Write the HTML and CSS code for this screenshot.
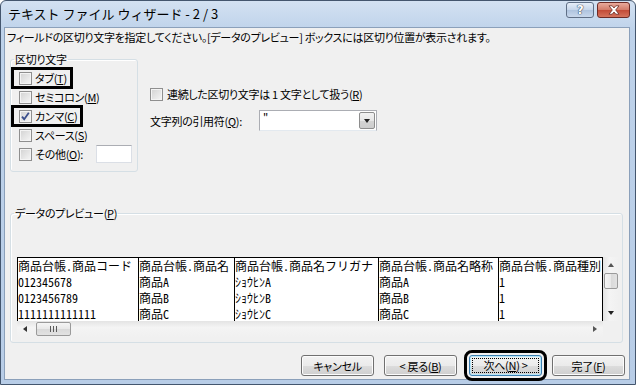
FILE: index.html
```html
<!DOCTYPE html>
<html lang="ja">
<head>
<meta charset="UTF-8">
<title>テキスト ファイル ウィザード - 2 / 3</title>
<link rel="stylesheet" href="styles.css">
</head>
<body>
<div class="window">
  <div class="titlebar">
    <span class="title">テキスト ファイル ウィザード - 2 / 3</span>
    <span class="capbtn help">?</span>
    <span class="capbtn close">
      <svg width="14" height="10" viewBox="0 0 14 10"><path d="M2 .8h3.2L7 3 8.8.8H12L8.7 5 12 9.2H8.8L7 7 5.2 9.2H2L5.3 5z" fill="#fff" stroke="#6b2a22" stroke-width=".8"/></svg>
    </span>
  </div>

  <div class="client">
    <p class="intro">フィールドの区切り文字を指定してください。[データのプレビュー] ボックスには区切り位置が表示されます。</p>

    <div class="upper">
      <fieldset class="group delims">
        <legend>区切り文字</legend>
        <div class="list">
          <label class="chk marked"><span class="box"></span><span>タブ(<u>T</u>)</span></label>
          <label class="chk"><span class="box"></span><span>セミコロン(<u>M</u>)</span></label>
          <label class="chk marked"><span class="box"><svg width="11" height="11" viewBox="0 0 11 11"><path d="M2 5.6l2.2 2.6L8.8 1.8" fill="none" stroke="#3b4f8c" stroke-width="1.8"/></svg></span><span>カンマ(<u>C</u>)</span></label>
          <label class="chk"><span class="box"></span><span>スペース(<u>S</u>)</span></label>
          <div class="other">
            <label class="chk"><span class="box"></span><span>その他(<u>O</u>):</span></label>
            <span class="field"></span>
          </div>
        </div>
      </fieldset>

      <div class="options">
        <label class="chk"><span class="box"></span><span>連続した区切り文字は 1 文字として扱う(<u>R</u>)</span></label>
        <div class="quote">
          <span class="qlabel">文字列の引用符(<u>Q</u>):</span>
          <span class="combo"><span>"</span><span class="drop"><i class="tri down"></i></span></span>
        </div>
      </div>
    </div>

    <fieldset class="group preview">
      <legend>データのプレビュー(<u>P</u>)</legend>
      <div class="pbox">
        <div class="pdata">
          <div class="grid">
            <div class="cell head">商品台帳.商品コード</div>
            <div class="cell head">商品台帳.商品名</div>
            <div class="cell head">商品台帳.商品名フリガナ</div>
            <div class="cell head">商品台帳.商品名略称</div>
            <div class="cell head">商品台帳.商品種別</div>
            <div class="cell head"></div>

            <div class="cell">012345678</div>
            <div class="cell">商品A</div>
            <div class="cell">ｼｮｳﾋﾝA</div>
            <div class="cell">商品A</div>
            <div class="cell">1</div>
            <div class="cell"></div>

            <div class="cell">0123456789</div>
            <div class="cell">商品B</div>
            <div class="cell">ｼｮｳﾋﾝB</div>
            <div class="cell">商品B</div>
            <div class="cell">1</div>
            <div class="cell"></div>

            <div class="cell">1111111111111</div>
            <div class="cell">商品C</div>
            <div class="cell">ｼｮｳﾋﾝC</div>
            <div class="cell">商品C</div>
            <div class="cell">1</div>
            <div class="cell"></div>
          </div>
        </div>
        <div class="vbar">
          <span class="arrow"><i class="tri up"></i></span>
          <span class="thumb"></span>
          <span class="arrow end"><i class="tri down"></i></span>
        </div>
        <div class="hbar">
          <span class="arrow"><i class="tri left"></i></span>
          <span class="thumb"><i class="grip"></i></span>
          <span class="arrow end"><i class="tri right"></i></span>
        </div>
        <div class="corner"></div>
      </div>
    </fieldset>

    <div class="buttons">
      <button class="btn">キャンセル</button>
      <button class="btn">&lt; 戻る(<u>B</u>)</button>
      <button class="btn default"><span class="focus">次へ(<u>N</u>) &gt;</span></button>
      <button class="btn">完了(<u>F</u>)</button>
    </div>
  </div>
</div>
</body>
</html>
```

FILE: styles.css
```css
body {
  margin: 0;
  font: 11px/14px "Noto Sans CJK JP", sans-serif;
  font-feature-settings: "palt";
  letter-spacing: -0.3px;
  color: #000;
}
u { text-underline-offset: 1px; }

/* window frame */
.window {
  width: 636px;
  height: 385px;
  box-sizing: border-box;
  display: flex;
  flex-direction: column;
  border: 1px solid #44566e;
  border-radius: 6px 6px 0 0;
  padding: 0 5px 4px 3px;
  background: linear-gradient(#d3e1f2, #bed2ea 30px, #b8cde7);
}
.titlebar {
  height: 26px;
  display: flex;
  align-items: flex-start;
}
.title {
  margin: 5px 0 0 4px;
  font-size: 13px;
  line-height: 16px;
  letter-spacing: 0;
  font-feature-settings: normal;
}
.capbtn {
  height: 16px;
  margin-top: 1px;
  box-sizing: border-box;
  border: 1px solid #5f6f86;
  border-radius: 3px;
  display: flex;
  align-items: center;
  justify-content: center;
}
.help {
  width: 28px;
  margin-left: auto;
  background: linear-gradient(#e6eef8, #c5d5ea 50%, #aec3de 51%, #c9d8ec);
  color: #fff;
  font: bold 12px/1 "DejaVu Sans", sans-serif;
  text-shadow: 0 0 1px #3a4a62, 0 0 1px #3a4a62, 0 0 1px #3a4a62;
}
.close {
  width: 33px;
  margin-left: 3px;
  border-color: #6d2b26;
  background: linear-gradient(#e9aa9c, #d27a68 50%, #c24a36 51%, #d5735c);
}

/* client area */
.client {
  flex: 1;
  display: flex;
  flex-direction: column;
  border: 1px solid #8ba0ba;
  background: #f0f0f0;
}
.intro {
  margin: 2px 0 0 2px;
}
.upper {
  display: flex;
  margin-top: 8px;
}

/* group boxes */
.group {
  margin: 0 0 0 5px;
  border: 1px solid #d5dfe5;
  border-radius: 3px;
  box-shadow: inset 1px 1px #fff;
  box-sizing: border-box;
  min-inline-size: 0;
}
.group legend {
  padding: 0 1px;
}
.delims {
  width: 128px;
  height: 120px;
  padding: 4px 0 0 3px;
}
.list {
  display: flex;
  flex-direction: column;
  align-items: flex-start;
  gap: 3px;
}
.chk {
  display: flex;
  align-items: center;
  gap: 3px;
  height: 16px;
  white-space: nowrap;
}
.list .chk {
  padding: 0 3px 0 5px;
}
.marked {
  outline: 3px solid #000;
}
.box {
  width: 13px;
  height: 13px;
  box-sizing: border-box;
  flex: none;
  border: 1px solid #8f8f8f;
  background: linear-gradient(135deg, #d2d2d2, #f6f6f6);
  box-shadow: inset 0 0 0 1px #f4f4f4;
  display: flex;
  align-items: center;
  justify-content: center;
}
.other {
  display: flex;
  align-items: center;
  align-self: stretch;
  margin-top: -1px;
}
.field {
  width: 36px;
  height: 18px;
  box-sizing: border-box;
  margin: 0 5px 0 auto;
  background: #fff;
  border: 1px solid #dbdfe6;
  border-top-color: #abadb3;
}

.options {
  display: flex;
  flex-direction: column;
  margin-left: 12px;
  padding-top: 34px;
}
.options .chk { gap: 4px; }
.quote {
  display: flex;
  align-items: center;
  margin-top: 8px;
}
.qlabel {
  width: 109px;
}
.combo {
  width: 118px;
  height: 21px;
  box-sizing: border-box;
  border: 1px solid #abadb3;
  border-bottom-color: #e3e9ef;
  background: #fff;
  padding-left: 3px;
  line-height: 14px;
  display: flex;
  justify-content: space-between;
}
.drop {
  width: 16px;
  height: 17px;
  margin: 1px;
  box-sizing: border-box;
  border: 1px solid #8d8d8d;
  border-radius: 2px;
  background: linear-gradient(#f2f2f2, #e6e6e6 50%, #d4d4d4 51%, #cdcdcd);
  display: flex;
  align-items: center;
  justify-content: center;
}

/* little arrow glyphs */
.tri {
  width: 0;
  height: 0;
  border: 3.5px solid transparent;
}
.tri.down  { border-top: 4px solid #222; border-bottom: 0; }
.tri.up    { border-bottom: 4px solid #555; border-top: 0; }
.tri.left  { border-right: 4px solid #333; border-left: 0; }
.tri.right { border-left: 4px solid #555; border-right: 0; }

/* preview */
.preview {
  width: 613px;
  height: 137px;
  margin-top: 34px;
  padding: 37px 0 0 6px;
}
.preview legend {
  margin-left: -3px;
}
.pbox {
  display: grid;
  grid-template-columns: 586px 16px;
  grid-template-rows: 64px 16px;
}
.pdata {
  overflow: hidden;
  background: #fff;
}
.grid {
  display: grid;
  grid-template-columns: 121px 96px 144px 120px 104px 40px;
  grid-template-rows: 17px 16px 16px 15px;
  font: 12px/15px "Noto Sans Mono CJK JP", "Noto Sans CJK JP", monospace;
  font-feature-settings: normal;
  letter-spacing: 0;
}
.cell {
  border-left: 1px solid #000;
  white-space: nowrap;
  overflow: hidden;
}
.cell.head {
  border-top: 1px solid #000;
}

.vbar, .hbar {
  display: flex;
  background: #eeeeee;
}
.vbar {
  flex-direction: column;
  background: linear-gradient(90deg, #e4e4e4, #f4f4f4 40%, #f0f0f0);
}
.hbar {
  background: linear-gradient(#e4e4e4, #f4f4f4 40%, #f0f0f0);
}
.arrow {
  width: 16px;
  height: 16px;
  flex: none;
  display: flex;
  align-items: center;
  justify-content: center;
}
.arrow.end { margin: auto 0 0 0; }
.hbar .arrow.end { margin: 0 0 0 auto; }
.thumb {
  box-sizing: border-box;
  border: 1px solid #9a9a9a;
  border-radius: 2px;
  background: linear-gradient(90deg, #f5f5f5, #e8e8e8 50%, #d9d9d9 51%, #e2e2e2);
}
.vbar .thumb {
  height: 16px;
  margin: 0 1px;
}
.hbar .thumb {
  width: 35px;
  margin: 1px 0 1px 3px;
  background: linear-gradient(#f5f5f5, #e8e8e8 50%, #d9d9d9 51%, #e2e2e2);
  display: flex;
  align-items: center;
  justify-content: center;
}
.grip {
  width: 1px;
  height: 6px;
  background: #5a5a5a;
  box-shadow: 3px 0 #5a5a5a, -3px 0 #5a5a5a;
}
.corner {
  background: #f0f0f0;
}

/* command buttons */
.buttons {
  display: flex;
  justify-content: flex-end;
  margin-top: 12px;
  padding-right: 4px;
}
.btn {
  width: 73px;
  height: 21px;
  margin-left: 10px;
  padding: 0;
  font: inherit;
  letter-spacing: inherit;
  border: 1px solid #707070;
  border-radius: 3px;
  background: linear-gradient(#f2f2f2, #ebebeb 50%, #dddddd 51%, #cfcfcf);
  box-shadow: inset 0 0 0 1px #fcfcfc;
  color: #000;
}
.btn.default {
  margin-left: 12px;
  border-color: #3c7fb1;
  box-shadow: inset 0 0 0 1px #b7e6f9;
  outline: 3px solid #000;
  outline-offset: 2px;
  display: flex;
  align-items: center;
  justify-content: center;
}
.focus {
  width: 67px;
  height: 15px;
  box-sizing: border-box;
  border: 1px dotted #000;
  line-height: 13px;
}
```
